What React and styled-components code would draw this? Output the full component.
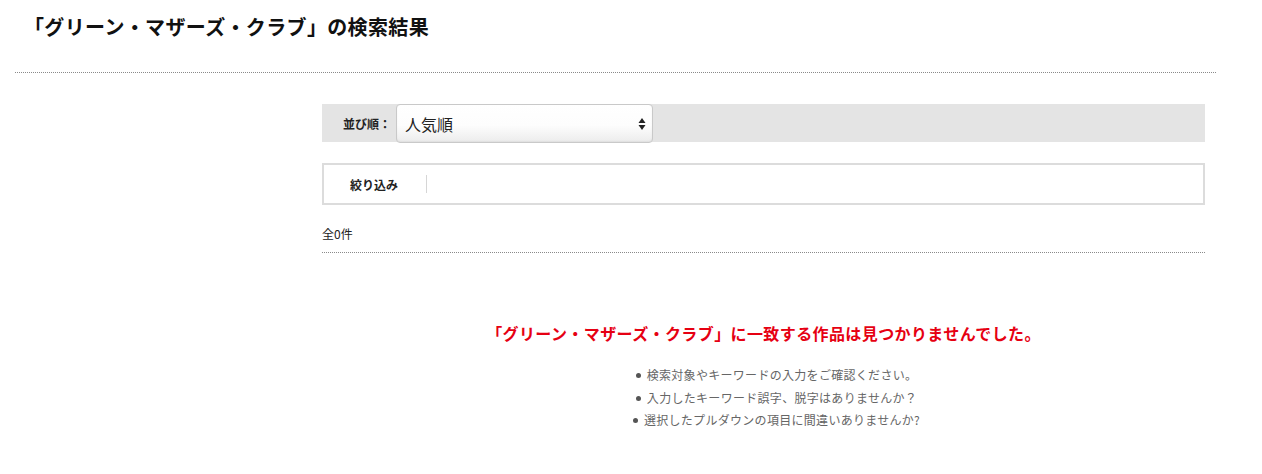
import React from 'react'
import styled, { createGlobalStyle } from 'styled-components'

const GlobalStyle = createGlobalStyle`
  body {
    margin: 0;
    background: #fff;
    color: #222;
    font-family: "Noto Sans CJK JP", "Noto Sans", sans-serif;
  }
`;

const keyword = 'グリーン・マザーズ・クラブ';

const hints = [
  '検索対象やキーワードの入力をご確認ください。',
  '入力したキーワード誤字、脱字はありませんか？',
  '選択したプルダウンの項目に間違いありませんか?',
];

export default function App() {
  return (
    <Page>
      <GlobalStyle />
      <Header>
        <h1>「{keyword}」の検索結果</h1>
      </Header>
      <Body>
        <Side />
        <Main>
          <SortBar>
            <SortLabel>並び順：</SortLabel>
            <Select>
              <span>人気順</span>
              <svg width="8" height="14" viewBox="0 0 8 14">
                <path d="M4 1 L7.5 6 L0.5 6 Z" fill="#222" />
                <path d="M4 13 L7.5 8 L0.5 8 Z" fill="#222" />
              </svg>
            </Select>
          </SortBar>
          <FilterBox>
            <FilterLabel>絞り込み</FilterLabel>
            <FilterDivider />
          </FilterBox>
          <Count>全0件</Count>
          <Empty>
            <EmptyTitle>「{keyword}」に一致する作品は見つかりませんでした。</EmptyTitle>
            <HintList>
              {hints.map((h) => (
                <li key={h}>{h}</li>
              ))}
            </HintList>
          </Empty>
        </Main>
      </Body>
    </Page>
  )
}

const Page = styled.div`
  width: 1262px;
  padding-bottom: 30px;
`;

const Header = styled.div`
  margin: 0 46px 0 15px;
  height: 72px;
  border-bottom: 1px dotted #8a8a8a;
  h1 {
    margin: 0;
    padding: 13px 0 0 9px;
    font-size: 20px;
    line-height: 28px;
    font-weight: 700;
    letter-spacing: 0.35px;
    color: #111;
  }
`;

const Body = styled.div`
  display: grid;
  grid-template-columns: 307px 883px;
  margin-left: 15px;
  padding-top: 31px;
`;

const Side = styled.div``;

const Main = styled.div`
  display: flex;
  flex-direction: column;
`;

const SortBar = styled.div`
  display: flex;
  align-items: center;
  height: 38px;
  background: #e4e4e4;
`;

const SortLabel = styled.div`
  width: 74px;
  padding-left: 21px;
  box-sizing: border-box;
  font-size: 12px;
  font-weight: 700;
  color: #222;
`;

const Select = styled.div`
  display: flex;
  align-items: center;
  justify-content: space-between;
  box-sizing: border-box;
  width: 257px;
  height: 39px;
  margin-top: 1px;
  padding: 0 6px 0 8px;
  border: 1px solid #c9c9c9;
  border-radius: 4px;
  background: linear-gradient(#ffffff 0%, #fdfdfd 55%, #ececec 100%);
  box-shadow: inset 0 -1px 2px rgba(0, 0, 0, 0.06);
  span {
    font-size: 16px;
    color: #222;
  }
`;

const FilterBox = styled.div`
  display: flex;
  align-items: center;
  height: 42px;
  margin-top: 21px;
  box-sizing: border-box;
  border: 2px solid #dcdcdc;
`;

const FilterLabel = styled.div`
  padding-left: 26px;
  width: 102px;
  box-sizing: border-box;
  font-size: 12px;
  font-weight: 700;
  color: #222;
`;

const FilterDivider = styled.div`
  width: 1px;
  height: 18px;
  background: #d6d6d6;
`;

const Count = styled.div`
  margin-top: 20px;
  padding-bottom: 10px;
  font-size: 12px;
  line-height: 17px;
  color: #222;
  border-bottom: 1px dotted #8a8a8a;
`;

const Empty = styled.div`
  display: flex;
  flex-direction: column;
  align-items: center;
  padding-top: 69px;
`;

const EmptyTitle = styled.p`
  margin: 0;
  font-size: 16px;
  line-height: 22px;
  font-weight: 700;
  letter-spacing: 0.4px;
  color: #e60012;
`;

const HintList = styled.ul`
  margin: 20px 0 0;
  padding: 0 0 0 26px;
  list-style: none;
  text-align: center;
  li {
    font-size: 12px;
    line-height: 22.5px;
    letter-spacing: 0.3px;
    color: #666;
    &::before {
      content: '';
      display: inline-block;
      width: 5px;
      height: 5px;
      margin: 0 6px 2px 0;
      border-radius: 50%;
      background: #555;
      vertical-align: middle;
    }
  }
`;
